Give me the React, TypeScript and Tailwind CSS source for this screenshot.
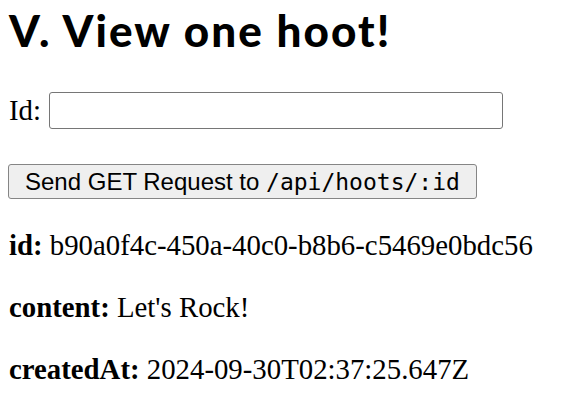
export default function App() {
  return (
    <div className="bg-white text-black px-[9px] font-['Liberation_Serif',serif]">
      <h2 className="pt-[10px] text-[44px] leading-[40px] font-black font-['Lato',sans-serif] tracking-[2.1px]">
        V. View one hoot!
      </h2>
      <div className="mt-[42px] flex items-center gap-[8px] text-[28.8px] leading-[33px]">
        <label>Id:</label>
        <input className="w-[454px] h-[37px] border border-[#767676] rounded-[3px] px-1 text-[20px]" />
      </div>
      <button className="mt-[35px] -ml-[1px] h-[35px] px-[16px] bg-[#efefef] border border-[#858585] rounded-[3px] text-[24px] leading-[28px] font-['Liberation_Sans',sans-serif]">
        Send GET Request to <code className="font-['DejaVu_Sans_Mono',monospace] text-[23px]">/api/hoots/:id</code>
      </button>
      <div className="mt-[30px] flex flex-col gap-[29px] text-[28.8px] leading-[33px]">
        <p><strong>id:</strong> b90a0f4c-450a-40c0-b8b6-c5469e0bdc56</p>
        <p><strong>content:</strong> Let's Rock!</p>
        <p><strong>createdAt:</strong> 2024-09-30T02:37:25.647Z</p>
      </div>
    </div>
  );
}
